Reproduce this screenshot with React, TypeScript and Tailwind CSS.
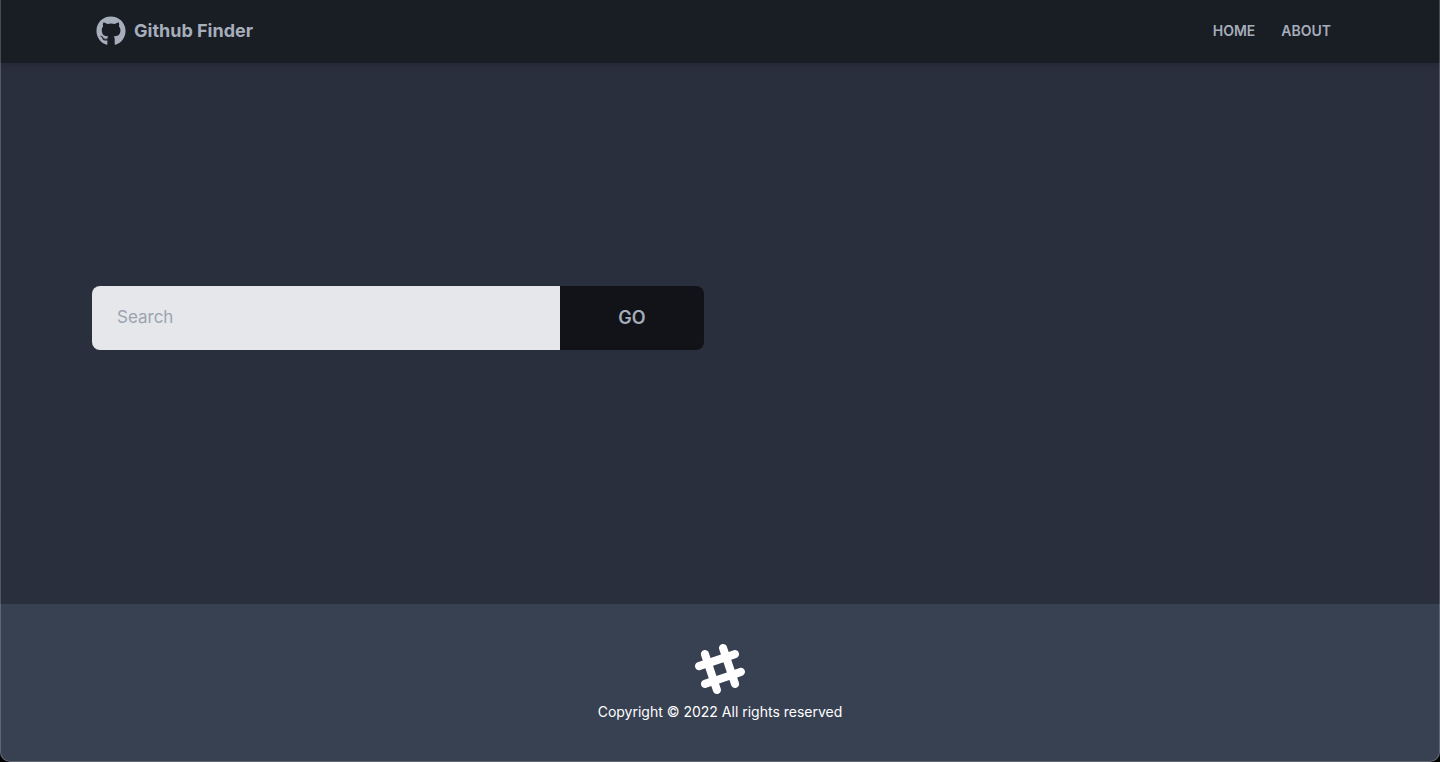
import { FaGithub } from 'react-icons/fa';

function Navbar() {
  return (
    <nav className="bg-[#191d24] shadow-md">
      <div className="mx-auto flex h-[63px] max-w-[1280px] items-center justify-between px-4 pb-0.5">
        <a href="/" className="flex items-center gap-2 text-lg font-bold">
          <FaGithub className="text-3xl" aria-hidden="true" />
          Github Finder
        </a>
        <div className="flex items-center text-sm font-semibold uppercase">
          <a href="/" className="px-[13px] py-1">Home</a>
          <a href="/about" className="px-[13px] py-1">About</a>
        </div>
      </div>
    </nav>
  );
}

function UserSearch() {
  return (
    <div className="grid grid-cols-1 gap-8 lg:grid-cols-2">
      <form className="flex h-16 overflow-hidden rounded-lg text-lg" onSubmit={(e) => e.preventDefault()}>
        <input
          type="text"
          aria-label="Search"
          placeholder="Search"
          className="min-w-0 flex-1 bg-[#e5e7eb] px-[25px] text-[17px] text-black outline-none placeholder:text-[#9ca3af]"
        />
        <button type="submit" className="w-36 bg-[#111318] font-semibold uppercase">
          Go
        </button>
      </form>
    </div>
  );
}

function Footer() {
  return (
    <footer className="flex flex-col items-center gap-2 bg-[#384152] p-10 text-sm text-white">
      <svg width="50" height="50" viewBox="0 0 24 24" fill="currentColor" fillRule="evenodd" clipRule="evenodd" aria-hidden="true">
        <path d="M22.672 15.226l-2.432.811.841 2.515c.33 1.019-.209 2.127-1.23 2.456-1.15.325-2.148-.321-2.463-1.226l-.84-2.518-5.013 1.677.84 2.517c.391 1.203-.434 2.542-1.831 2.542-.88 0-1.601-.564-1.86-1.314l-.842-2.516-2.431.809c-1.135.328-2.145-.317-2.463-1.229-.329-1.018.211-2.127 1.231-2.456l2.432-.809-1.621-4.823-2.432.808c-1.355.384-2.558-.59-2.558-1.839 0-.817.509-1.582 1.327-1.846l2.433-.809-.842-2.515c-.33-1.02.211-2.129 1.232-2.458 1.02-.329 2.13.209 2.461 1.229l.842 2.515 5.011-1.677-.839-2.517c-.403-1.238.484-2.553 1.843-2.553.819 0 1.585.509 1.85 1.326l.841 2.517 2.431-.81c1.02-.33 2.131.211 2.461 1.229.332 1.018-.21 2.126-1.23 2.456l-2.433.809 1.622 4.823 2.433-.809c1.242-.401 2.557.484 2.557 1.838 0 .819-.51 1.583-1.328 1.847m-8.992-6.428l-5.01 1.675 1.619 4.828 5.011-1.674-1.62-4.829z" />
      </svg>
      <p>Copyright © 2022 All rights reserved</p>
    </footer>
  );
}

export default function App() {
  return (
    <div className="bg-black font-[Inter,sans-serif] text-[#a6adbb]">
      <div className="relative flex min-h-screen flex-col overflow-hidden rounded-b-[10px] bg-[#2a2f3d]">
        <Navbar />
        <main className="mx-auto flex w-full max-w-[1280px] flex-1 flex-col justify-center px-3 pb-8">
          <UserSearch />
        </main>
        <Footer />
        <div className="pointer-events-none absolute inset-0 rounded-b-[10px] border-x border-b border-white/20" />
      </div>
    </div>
  );
}
